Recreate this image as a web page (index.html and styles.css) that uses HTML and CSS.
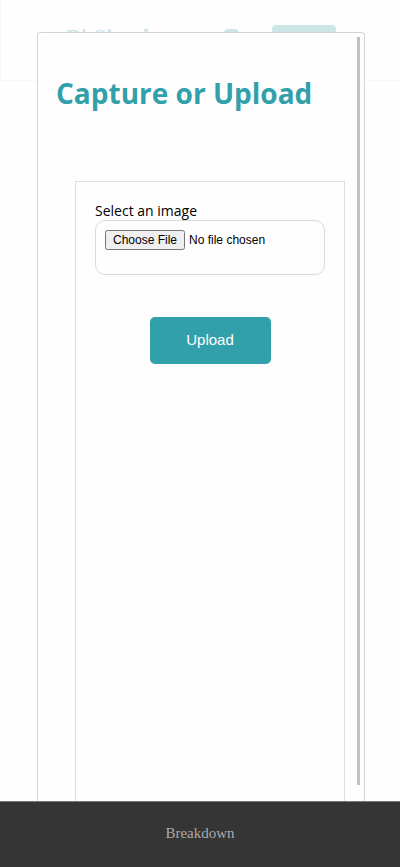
FILE: index.html
```html
<!DOCTYPE html>
<html lang="en">
<head>
<meta charset="utf-8">
<meta name="viewport" content="width=device-width, initial-scale=1">
<title>Capture or Upload</title>
<link rel="stylesheet" href="styles.css">
</head>
<body>
<header class="site-header">
  <span class="brand">BitSimpl</span>
  <svg class="avatar" viewBox="0 0 20 20" aria-hidden="true"><path d="M5 0h9q3 1 4 6v14H1V6q1-5 4-6z"/></svg>
  <span class="header-action"></span>
</header>
<div class="overlay">
  <main class="dialog">
    <div class="dialog-scroll">
      <h1 class="title">Capture or Upload</h1>
      <form class="panel">
        <label class="label" for="image">Select an image</label>
        <input class="file" id="image" type="file">
        <button class="upload" type="button">Upload</button>
      </form>
    </div>
    <div class="scroll-thumb"></div>
  </main>
</div>
<footer class="footer"><a class="footer-link" href="#">Breakdown</a></footer>
</body>
</html>
```
FILE: styles.css
```css
* {
  box-sizing: border-box;
}

body {
  margin: 0;
  height: 100vh;
  display: flex;
  flex-direction: column;
  justify-content: space-between;
  overflow: hidden;
  background: #fefefe;
  font-family: "Segoe UI", "Open Sans", sans-serif;
  color: #000;
}

.site-header {
  display: flex;
  align-items: flex-start;
  height: 81px;
  padding: 25px 64px 0 65px;
  border-left: 1px solid #f7f7f7;
  border-bottom: 1px solid #f7f7f7;
}

.brand {
  flex: 1;
  font-family: "Liberation Serif", serif;
  font-size: 22px;
  line-height: 24px;
  font-weight: 700;
  color: #cce6e8;
}

.avatar {
  width: 20px;
  height: 20px;
  margin: 4px 30px 0 0;
  fill: #cce6e8;
}

.header-action {
  width: 64px;
  height: 32px;
  border-radius: 4px;
  background: #cce6e8;
}

.overlay {
  position: absolute;
  inset: 32px 35px 66px 37px;
  display: flex;
}

.dialog {
  flex: 1;
  display: flex;
  padding-right: 4px;
  border: 1px solid #d3d3d3;
  border-bottom: 0;
  border-radius: 4px 4px 0 0;
  background: #fefefe;
}

.dialog-scroll {
  flex: 1;
  display: flex;
  flex-direction: column;
  padding-left: 18px;
}

.title {
  margin: 40px 0 68px;
  font-size: 28px;
  line-height: 40px;
  font-weight: 700;
  white-space: nowrap;
  color: #31a0aa;
}

.panel {
  flex: 1;
  display: flex;
  flex-direction: column;
  margin: 0 12px 0 19px;
  padding: 20px 19px 0;
  border: 1px solid #dedede;
  border-bottom: 0;
}

.label {
  font-size: 14px;
  line-height: 18px;
}

.file {
  width: 100%;
  height: 55px;
  padding: 9px;
  border: 1px solid #d9d9d9;
  border-radius: 10px;
  font-family: "Liberation Sans", sans-serif;
  font-size: 12px;
}

.upload {
  align-self: center;
  width: 121px;
  height: 47px;
  margin-top: 42px;
  padding: 0 0 2px;
  border: 0;
  border-radius: 5px;
  background: #31a0aa;
  color: #fff;
  font-family: "Liberation Sans", sans-serif;
  font-size: 15px;
}

.scroll-thumb {
  width: 3px;
  margin: 4px 0 16px;
  background: #c1c1c1;
}

.footer {
  position: relative;
  display: flex;
  align-items: center;
  justify-content: center;
  height: 66px;
  padding-bottom: 2px;
  border-top: 1px solid #777;
  background: #353535;
}

.footer-link {
  color: #aaa;
  font-family: "Liberation Serif", serif;
  font-size: 15px;
  text-decoration: none;
}
```
